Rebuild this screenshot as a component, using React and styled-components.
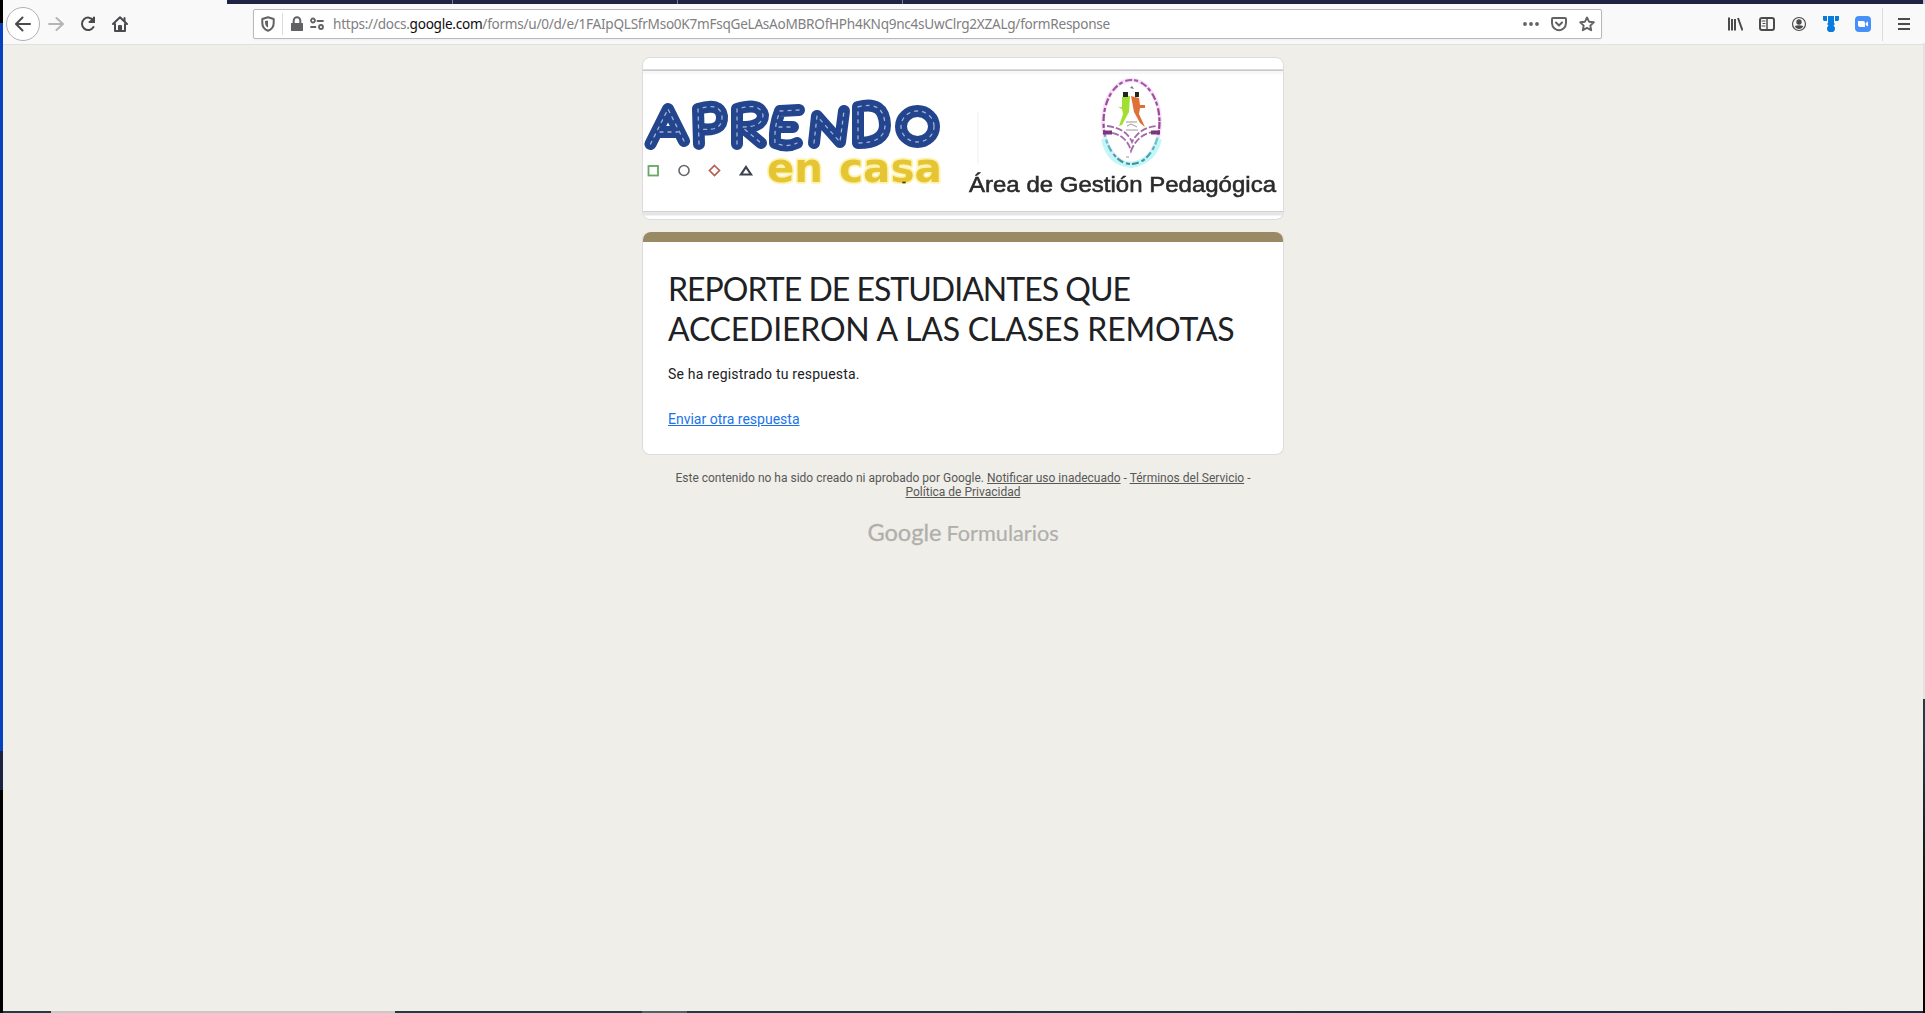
import React from 'react';
import styled, { createGlobalStyle } from 'styled-components';

const Global = createGlobalStyle`
  * { box-sizing: border-box; }
  body { margin: 0; background: #efeee9; font-family: Roboto, "Liberation Sans", sans-serif; overflow: hidden; }
  svg { display: block; flex: none; }
`;
const Desktop = styled.div`
  width: 1925px; height: 1013px; display: grid;
  grid-template-columns: 3px 1920px 2px; grid-template-rows: 1011px 2px; overflow: hidden;
`;
const LeftEdge = styled.div`
  grid-row: span 2;
  background: linear-gradient(#000 23px, #0741bf 23px, #0741bf 751px, #1c2340 751px, #1c2340 790px, #000 790px);
`;
const RightEdge = styled.div`
  grid-row: span 2;
  background: linear-gradient(#c9c9d2 4px, #fafafa 4px, #fafafa 43px, #e3e3e6 43px, #e3e3e6 699px, #213a46 699px, #213a46 740px, #000 960px);
`;
const Browser = styled.div`display: flex; flex-direction: column; background: #efeee9;`;
const TabStrip = styled.div`
  height: 4px; display: flex; background: #f9f9fa; padding-left: 224px;
`;
const Tab = styled.div`
  width: ${p => p.$w}px; flex: ${p => (p.$w ? 'none' : 1)}; background: #1f2344;
  border-right: ${p => (p.$w ? '1px solid #777a91' : 'none')};
`;
const Toolbar = styled.div`
  height: 41px; display: flex; align-items: center; background: #f9f9fa;
  border-bottom: 1px solid #e0e0e2; padding: 0 0 0 3px;
`;
const BackButton = styled.div`
  width: 34px; height: 34px; border-radius: 50%; border: 1px solid #b1b1b3; background: #fff;
  display: flex; align-items: center; justify-content: center;
`;
const NavButtons = styled.div`display: flex; width: 247px; align-items: center; gap: 8px;`;
const NavIcons = styled.div`display: flex; gap: 16px;`;
const AddressBar = styled.div`
  width: 1349px; height: 30px; border: 1px solid #b9b9bb; border-radius: 2px; background: #fff;
  display: flex; align-items: center; padding: 0 6px 0 6px; box-shadow: 0 1px 3px #0000000d;
`;
const Separator = styled.div`width: 1px; height: ${p => p.$h}px; background: #dcdcde; margin: ${p => p.$m};`;
const Url = styled.div`
  flex: 1; margin-left: 8px; font: 13.6px/20px "Noto Sans", sans-serif; color: #808082; white-space: nowrap;
  letter-spacing: -0.27px;
  b { font-weight: 400; color: #0c0c0d; }
`;
const IconGroup = styled.div`display: flex; align-items: center; gap: ${p => p.$gap}px; margin-left: ${p => p.$ml || 0}px;`;

const Page = styled.main`
  width: 642px; margin: 12px 0 0 639px; display: flex; flex-direction: column;
`;
const Banner = styled.div`
  height: 163px; border: 1px solid #dadce0; border-radius: 8px; background: #fff; overflow: hidden;
`;
const Card = styled.section`
  margin-top: 12px; height: 223px; border: 1px solid #dadce0; border-top: none;
  border-radius: 8px; background: #fff; color: #202124;
`;
const Accent = styled.div`height: 10px; background: #998a64; border-radius: 8px 8px 0 0;`;
const CardBody = styled.div`padding: 27px 24px 0 25px;`;
const Title = styled.h1`
  margin: 0; font: 400 32px/40px Lato, Roboto, sans-serif; white-space: nowrap;
`;
const TitleLine = styled.span`display: block; letter-spacing: ${p => p.$ls}px;`;
const Message = styled.p`margin: 15px 0 25px; font-size: 14px; line-height: 20px; letter-spacing: 0.2px;`;
const Link = styled.a`color: #1a73e8; font-size: 14px; line-height: 20px; text-decoration: underline; display: block;`;
const Legal = styled.footer`
  margin-top: 16px; text-align: center; font-size: 12px; line-height: 14px; color: #585856;
  a { text-decoration: underline; }
`;
const Brand = styled.div`
  margin-top: 18px; display: flex; justify-content: center; align-items: baseline; gap: 5px; color: #b0afac;
  font: 400 21.7px/30px Lato, sans-serif;
  strong { font-size: 23.6px; font-weight: 400; -webkit-text-stroke: 0.3px #b0afac; }
  span { -webkit-text-stroke: 0.2px #b0afac; }
`;
const TaskBar = styled.div`display: flex; background: linear-gradient(90deg, #213a46 50%, #1f2a46); padding-left: 34px;`;
const TaskItem = styled.div`
  width: ${p => p.$w}px; background: ${p => p.$bg}; margin: 0 ${p => p.$mr || 0}px 0 ${p => p.$ml || 0}px;
`;

const Icon = ({ children, size = 16, color = '#4b4b4d', box = '0 0 16 16' }) => (
  <svg width={size} height={size} viewBox={box} fill="none" stroke={color} strokeWidth="2" strokeLinecap="round" strokeLinejoin="round">{children}</svg>
);

const BannerArt = () => (
  <svg width="640" height="161" viewBox="643 58 640 161">
    <defs>
      <filter id="soft" x="-5%" y="-10%" width="110%" height="120%"><feGaussianBlur stdDeviation="0.7" /></filter>
      <linearGradient id="rim" x1="0" y1="0" x2="0" y2="1">
        <stop offset="0" stopColor="#ac55ad" /><stop offset=".58" stopColor="#904795" /><stop offset=".7" stopColor="#66cbd3" /><stop offset="1" stopColor="#398f9c" />
      </linearGradient>
      <g id="letters" fill="none" strokeLinecap="round" strokeLinejoin="round">
        <path d="M650.500 144L668 109L684 141M660 132H678" />
        <path d="M699 144L698 109Q720 102 722 116Q723 132 701 129" />
        <path d="M737 144V109Q760 102 763 115Q763 127 742 127L761 143" />
        <path d="M799 110L780 111Q774 126 775 143Q787 148 797 143M779 127H793" />
        <path d="M814 143L817 116L840 142L844 111" />
        <path d="M858 107Q884 100 885 125Q885 143 858 143Z" />
        <ellipse cx="917.500" cy="126.500" rx="16.500" ry="15.500" />
      </g>
    </defs>
    <rect x="643" y="69.400" width="640" height="1.500" fill="#c4c4c6" />
    <rect x="643" y="71" width="640" height="3" fill="#f8f8f8" />
    <rect x="643" y="211" width="640" height="1.300" fill="#d2d2d4" />
    <rect x="643" y="212" width="640" height="3.500" fill="#e5e5e6" />
    <path d="M978 112V164" stroke="#f8f8f8" strokeWidth="2" />
    <g filter="url(#soft)">
      <use href="#letters" stroke="#24458d" strokeWidth="12" />
      <use href="#letters" stroke="#a3b2d8" strokeWidth="1.300" strokeDasharray="3 5" />
      <rect x="648.500" y="166" width="9.500" height="9.500" stroke="#65a962" strokeWidth="1.800" fill="none" />
      <circle cx="684" cy="170.500" r="5" stroke="#65656d" strokeWidth="1.600" fill="none" />
      <path d="M714.500 165.500L719.500 170.500L714.500 175.500L709.500 170.500Z" stroke="#b95d54" strokeWidth="1.700" fill="none" />
      <path d="M746 167L751 174.500H741Z" stroke="#3c424e" strokeWidth="2.200" fill="none" />
      <g fontFamily="DejaVu Sans, sans-serif" fontWeight="700" fontSize="41" fill="#e6c534" stroke="#fff3b0" strokeWidth="3.500" strokeLinejoin="round" paintOrder="stroke">
        <text x="767" y="182" textLength="56" lengthAdjust="spacingAndGlyphs">en</text>
        <text x="839" y="182" textLength="103" lengthAdjust="spacingAndGlyphs">casa</text>
      </g>
    </g>
    <ellipse cx="904" cy="182.500" rx="2" ry="1" fill="#554310" />
    <g filter="url(#soft)">
      <ellipse cx="1131.500" cy="122" rx="28.500" ry="42" fill="none" stroke="#f6e2f7" strokeWidth="4" />
      <path d="M1104 139Q1109 163 1131 165Q1154 161 1159 139" fill="none" stroke="#c4f6f8" strokeWidth="6" />
      <ellipse cx="1131.500" cy="122" rx="28" ry="42" fill="none" stroke="url(#rim)" strokeWidth="2.200" strokeDasharray="7 2 4 3" />
      <path d="M1103 132Q1126 132 1131 151Q1138 132 1160 131M1107 126Q1126 128 1132 142Q1139 128 1156 126" fill="none" stroke="#a36aa8" strokeWidth="1.800" strokeDasharray="7 2" />
      <path d="M1103 132.500H1112M1151 132.500H1160" stroke="#7e367d" strokeWidth="4" />
      <path d="M1122 97L1130 96L1129 112L1122 125L1119 126L1123 114L1122 109L1118 107H1122Z" fill="#a3df30" />
      <path d="M1131 96L1139 98L1140 105H1145V108H1140L1139 114L1145 127L1140 123L1134 112Z" fill="#df7137" />
      <path d="M1123 92H1128V97H1123ZM1135 92H1139V97H1135Z" fill="#20251c" />
      <path d="M1130 88L1132 86L1134 89Z" fill="#687c88" />
      <path d="M1126 122H1137M1127 126L1131 124L1137 127M1126 130H1138M1126 157H1129" stroke="#999" strokeWidth="1" fill="none" />
      <text x="969" y="192" fill="#2a2a2a" stroke="#2a2a2a" strokeWidth=".55" fontFamily="Liberation Sans, sans-serif" fontSize="22.500" textLength="307" lengthAdjust="spacingAndGlyphs">Área de Gestión Pedagógica</text>
    </g>
  </svg>
);

export default function App() {
  return (
    <Desktop>
      <Global />
      <LeftEdge />
      <Browser>
        <TabStrip><Tab $w={226} /><Tab $w={225} /><Tab $w={225} /><Tab /></TabStrip>
        <Toolbar>
          <NavButtons>
            <BackButton><Icon><path d="M15 8H1.500M7.500 1.500L1 8L7.500 14.500" /></Icon></BackButton>
            <NavIcons>
              <Icon color="#b5b5b7"><path d="M1 8H14.500M8.500 2L15 8L8.500 14" /></Icon>
              <Icon><path d="M13.300 4.300A6.200 6.200 0 1 0 13.500 11M9.500 6H14V1.500" /><path d="M14 2V6H10Z" fill="#4b4b4d" /></Icon>
              <Icon><path d="M1 8L8 1.300L15 8M3 8V15H13V8" /><path d="M7 14V10H9V14M12.500 2V5" /></Icon>
            </NavIcons>
          </NavButtons>
          <AddressBar>
            <Icon color="#626264"><path d="M8 1.200L13.700 3V7C13.700 10.500 12 13.300 8 14.800C4 13.300 2.300 10.500 2.300 7V3Z" /><path d="M8 4.500V11.500C6 10.500 5 9 5 6V5Z" fill="#626264" stroke="none" /></Icon>
            <Separator $h={22} $m="0 6px 0 6px" />
            <Icon color="#626264"><path d="M4.700 7V4.500A3.300 3.300 0 0 1 11.300 4.500V7" /><rect x="2" y="7" width="12" height="8" rx="1" fill="#626264" stroke="none" /><path d="M3 8H13V14H3Z" fill="#626264" /></Icon>
            <IconGroup $ml={4}><Icon color="#626264"><circle cx="4" cy="4.500" r="2" strokeWidth="1.800" /><path d="M8.500 5H14M2 11H6.500" strokeWidth="1.800" /><circle cx="12" cy="11" r="2" strokeWidth="1.800" /></Icon></IconGroup>
            <Url>https://docs.<b>google.com</b>/forms/u/0/d/e/1FAIpQLSfrMso0K7mFsqGeLAsAoMBROfHPh4KNq9nc4sUwClrg2XZALg/formResponse</Url>
            <IconGroup $gap={12}>
              <Icon color="#626264"><path d="M2 8H2.010M8 8H8.010M14 8H14.010" strokeWidth="3.800" /></Icon>
              <Icon color="#626264"><path d="M2 2H14Q15 2 15 3V7Q15 10.500 12.500 12.500Q8 16 3.500 12.500Q1 10.500 1 7V3Q1 2 2 2ZM5 6.500L8 9.500L11 6.500" /></Icon>
              <Icon color="#626264"><path d="M8 1.500L10 5.700L14.800 6.300L11.300 9.600L12.200 14.200L8 11.900L3.800 14.200L4.700 9.600L1.200 6.300L6 5.700Z" strokeWidth="1.900" /></Icon>
            </IconGroup>
          </AddressBar>
          <IconGroup $gap={16} $ml={125}>
            <Icon><path d="M2 1.500V14.500M5 3V14.500M8 3V14.500M11 2L15.500 14.500" strokeWidth="2" strokeLinecap="butt" /></Icon>
            <Icon><rect x="1" y="2" width="14" height="12" rx="2" /><path d="M8 2V14" strokeWidth="1.500" /><path d="M3 5H6M4 7.500H6M3 10H6" strokeWidth="1" /></Icon>
            <Icon><circle cx="8" cy="8" r="6.500" strokeWidth="1.200" /><circle cx="8" cy="6" r="2.700" fill="#4b4b4d" stroke="none" /><path d="M3.700 10Q8 8.500 12.300 10Q11 13 8 13Q5 13 3.700 10Z" fill="#4b4b4d" stroke="none" /></Icon>
            <Icon><path d="M0 0H4V5H1L0 4ZM12 0H16V4L15 5H12ZM5 0H11V7L12 8L10.500 9.500A4 4 0 1 1 5.500 9.500L4 8L5 7Z" fill="#087bdd" stroke="none" /></Icon>
            <Icon><rect width="16" height="16" rx="4" fill="#4690fa" stroke="none" /><path d="M3 5H8Q10 5 10 7V11H5Q3 11 3 9ZM10.700 7L13 5.500V10.500L10.700 9Z" fill="#fff" stroke="none" /></Icon>
          </IconGroup>
          <Separator $h={33} $m="0 13px 0 11px" />
          <Icon><path d="M2 3H14M2 8H14M2 13H14" strokeLinecap="butt" /></Icon>
        </Toolbar>
        <Page>
          <Banner><BannerArt /></Banner>
          <Card>
            <Accent />
            <CardBody>
              <Title>
                <TitleLine $ls={-0.98}>REPORTE DE ESTUDIANTES QUE</TitleLine>
                <TitleLine $ls={-0.19}>ACCEDIERON A LAS CLASES REMOTAS</TitleLine>
              </Title>
              <Message>Se ha registrado tu respuesta.</Message>
              <Link>Enviar otra respuesta</Link>
            </CardBody>
          </Card>
          <Legal>
            Este contenido no ha sido creado ni aprobado por Google. <a>Notificar uso inadecuado</a> - <a>Términos del Servicio</a> -<br /><a>Política de Privacidad</a>
          </Legal>
          <Brand><strong>Google</strong><span>Formularios</span></Brand>
        </Page>
      </Browser>
      <RightEdge />
      <TaskBar><TaskItem $w={344} $bg="#c8c9c9" $ml={14} $mr={247} /><TaskItem $w={45} $bg="#506168" /></TaskBar>
    </Desktop>
  );
}
